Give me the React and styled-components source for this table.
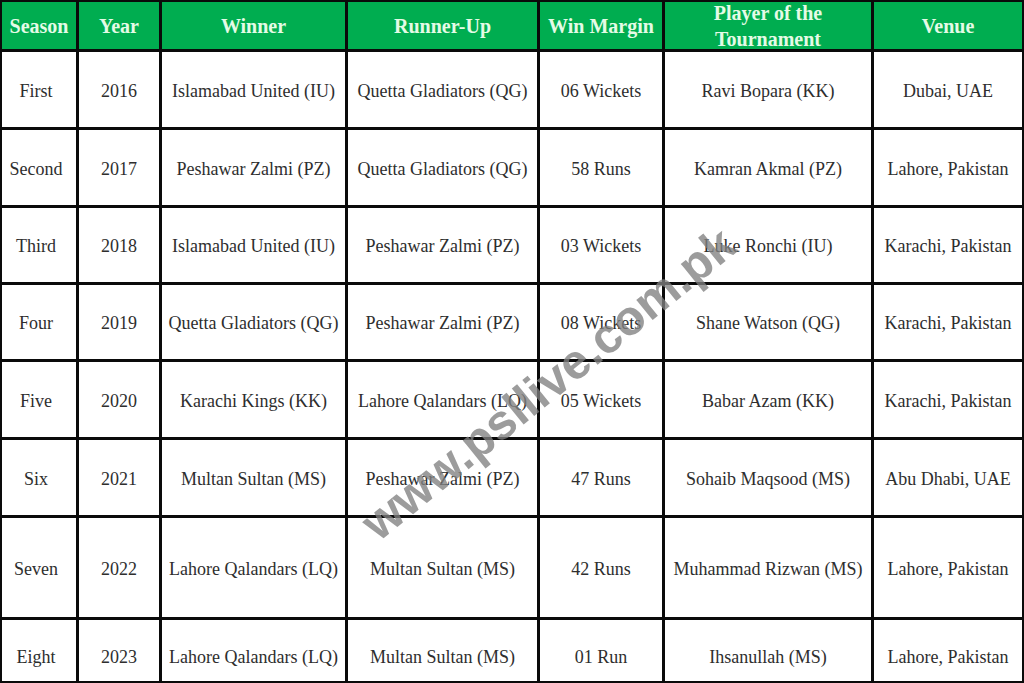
import React from "react"
import styled, { createGlobalStyle } from "styled-components"

const GlobalStyle = createGlobalStyle`
  html, body {
    margin: 0;
    padding: 0;
    background: #ffffff;
  }
`

const Page = styled.div`
  position: relative;
  width: 1024px;
  height: 683px;
  overflow: hidden;
`

const Grid = styled.div`
  display: grid;
  grid-template-columns: 74px 80px 183px 189px 122px 206px 148px;
  grid-template-rows: 47px 75px 75px 74px 74px 75px 75px 99px 61px;
  gap: 3px;
  padding: 2px;
  width: 1024px;
  height: 683px;
  box-sizing: border-box;
  background: #0a0a0a;
`

const HeadCell = styled.div`
  display: flex;
  align-items: center;
  justify-content: center;
  text-align: center;
  background: #00ad50;
  color: #e4fbe6;
  font-family: "Liberation Serif", "Times New Roman", serif;
  font-weight: bold;
  font-size: 20px;
  line-height: 26px;
  white-space: nowrap;
`

const Cell = styled.div`
  display: flex;
  align-items: center;
  justify-content: center;
  background: #ffffff;
  color: #2e2e2e;
  font-family: "Liberation Serif", "Times New Roman", serif;
  font-size: 18px;
  white-space: nowrap;
  padding-top: ${p => p.$shift || 0}px;
  padding-right: ${p => p.$nudge || 0}px;
  box-sizing: border-box;
`

const Watermark = styled.div`
  position: absolute;
  left: 548px;
  top: 383px;
  transform: translate(-50%, -50%) rotate(-39deg);
  font-family: "Liberation Sans", Arial, sans-serif;
  font-weight: bold;
  font-size: 49px;
  color: rgba(128, 128, 128, 0.78);
  white-space: nowrap;
  pointer-events: none;
`

const headers = [
  "Season",
  "Year",
  "Winner",
  "Runner-Up",
  "Win Margin",
  <>Player of the<br />Tournament</>,
  "Venue",
]

const rows = [
  ["First", "2016", "Islamabad United (IU)", "Quetta Gladiators (QG)", "06 Wickets", "Ravi Bopara (KK)", "Dubai, UAE"],
  ["Second", "2017", "Peshawar Zalmi (PZ)", "Quetta Gladiators (QG)", "58 Runs", "Kamran Akmal (PZ)", "Lahore, Pakistan"],
  ["Third", "2018", "Islamabad United (IU)", "Peshawar Zalmi (PZ)", "03 Wickets", "Luke Ronchi (IU)", "Karachi, Pakistan"],
  ["Four", "2019", "Quetta Gladiators (QG)", "Peshawar Zalmi (PZ)", "08 Wickets", "Shane Watson (QG)", "Karachi, Pakistan"],
  ["Five", "2020", "Karachi Kings (KK)", "Lahore Qalandars (LQ)", "05 Wickets", "Babar Azam (KK)", "Karachi, Pakistan"],
  ["Six", "2021", "Multan Sultan (MS)", "Peshawar Zalmi (PZ)", "47 Runs", "Sohaib Maqsood (MS)", "Abu Dhabi, UAE"],
  ["Seven", "2022", "Lahore Qalandars (LQ)", "Multan Sultan (MS)", "42 Runs", "Muhammad Rizwan (MS)", "Lahore, Pakistan"],
  ["Eight", "2023", "Lahore Qalandars (LQ)", "Multan Sultan (MS)", "01 Run", "Ihsanullah (MS)", "Lahore, Pakistan"],
]

const App = () => {
  return (
    <>
      <GlobalStyle />
      <Page>
        <Grid>
          { headers.map((h, i) => <HeadCell key={ "h" + i }>{ h }</HeadCell>) }
          { rows.map((row, r) =>
            row.map((text, c) =>
              <Cell
                key={ r + "-" + c }
                $shift={ r === rows.length - 1 ? 14 : 3 }
                $nudge={ c === 0 ? 6 : 0 }>
                { text }
              </Cell>
            )
          ) }
        </Grid>
        <Watermark>www.psllive.com.pk</Watermark>
      </Page>
    </>
  )
}

export default App
